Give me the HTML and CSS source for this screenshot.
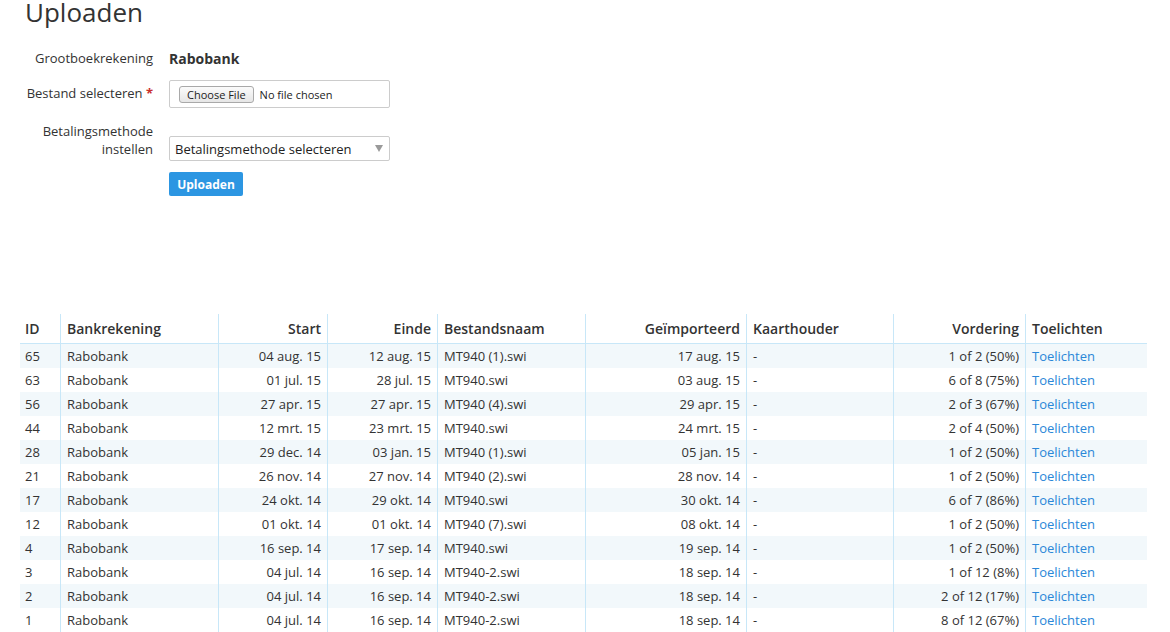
FILE: index.html
```html
<!DOCTYPE html>
<html lang="nl">
<head>
<meta charset="utf-8">
<title>Uploaden</title>
<link rel="stylesheet" href="styles.css">
</head>
<body>
<div class="page">
  <h1 class="title">Uploaden</h1>
  <form class="upload-form">
    <div class="form-row row-static">
      <div class="label">Grootboekrekening</div>
      <div class="value static-value">Rabobank</div>
    </div>
    <div class="form-row row-file">
      <div class="label label-file">Bestand selecteren <span class="req">*</span></div>
      <div class="value">
        <div class="file-box">
          <span class="file-btn">Choose File</span>
          <span class="file-text">No file chosen</span>
        </div>
      </div>
    </div>
    <div class="form-row row-select">
      <div class="label">Betalingsmethode<br>instellen</div>
      <div class="value">
        <div class="select-box">
          <span>Betalingsmethode selecteren</span>
          <svg class="caret" width="8" height="7" viewBox="0 0 8 7"><path d="M0 0H8L4 7Z" fill="#9a9a9a"/></svg>
        </div>
      </div>
    </div>
    <div class="form-row row-submit">
      <div class="label"></div>
      <div class="value"><button type="button" class="btn-primary">Uploaden</button></div>
    </div>
  </form>

  <table class="data-table">
    <colgroup>
      <col class="c-id"><col class="c-bank"><col class="c-start"><col class="c-end"><col class="c-file"><col class="c-imp"><col class="c-card"><col class="c-prog"><col class="c-link">
    </colgroup>
    <thead>
      <tr>
        <th>ID</th><th>Bankrekening</th><th class="r">Start</th><th class="r">Einde</th><th>Bestandsnaam</th><th class="r">Geïmporteerd</th><th>Kaarthouder</th><th class="r">Vordering</th><th>Toelichten</th>
      </tr>
    </thead>
    <tbody>
      <tr><td>65</td><td>Rabobank</td><td class="r">04 aug. 15</td><td class="r">12 aug. 15</td><td>MT940 (1).swi</td><td class="r">17 aug. 15</td><td>-</td><td class="r">1 of 2 (50%)</td><td><a href="#">Toelichten</a></td></tr>
      <tr><td>63</td><td>Rabobank</td><td class="r">01 jul. 15</td><td class="r">28 jul. 15</td><td>MT940.swi</td><td class="r">03 aug. 15</td><td>-</td><td class="r">6 of 8 (75%)</td><td><a href="#">Toelichten</a></td></tr>
      <tr><td>56</td><td>Rabobank</td><td class="r">27 apr. 15</td><td class="r">27 apr. 15</td><td>MT940 (4).swi</td><td class="r">29 apr. 15</td><td>-</td><td class="r">2 of 3 (67%)</td><td><a href="#">Toelichten</a></td></tr>
      <tr><td>44</td><td>Rabobank</td><td class="r">12 mrt. 15</td><td class="r">23 mrt. 15</td><td>MT940.swi</td><td class="r">24 mrt. 15</td><td>-</td><td class="r">2 of 4 (50%)</td><td><a href="#">Toelichten</a></td></tr>
      <tr><td>28</td><td>Rabobank</td><td class="r">29 dec. 14</td><td class="r">03 jan. 15</td><td>MT940 (1).swi</td><td class="r">05 jan. 15</td><td>-</td><td class="r">1 of 2 (50%)</td><td><a href="#">Toelichten</a></td></tr>
      <tr><td>21</td><td>Rabobank</td><td class="r">26 nov. 14</td><td class="r">27 nov. 14</td><td>MT940 (2).swi</td><td class="r">28 nov. 14</td><td>-</td><td class="r">1 of 2 (50%)</td><td><a href="#">Toelichten</a></td></tr>
      <tr><td>17</td><td>Rabobank</td><td class="r">24 okt. 14</td><td class="r">29 okt. 14</td><td>MT940.swi</td><td class="r">30 okt. 14</td><td>-</td><td class="r">6 of 7 (86%)</td><td><a href="#">Toelichten</a></td></tr>
      <tr><td>12</td><td>Rabobank</td><td class="r">01 okt. 14</td><td class="r">01 okt. 14</td><td>MT940 (7).swi</td><td class="r">08 okt. 14</td><td>-</td><td class="r">1 of 2 (50%)</td><td><a href="#">Toelichten</a></td></tr>
      <tr><td>4</td><td>Rabobank</td><td class="r">16 sep. 14</td><td class="r">17 sep. 14</td><td>MT940.swi</td><td class="r">19 sep. 14</td><td>-</td><td class="r">1 of 2 (50%)</td><td><a href="#">Toelichten</a></td></tr>
      <tr><td>3</td><td>Rabobank</td><td class="r">04 jul. 14</td><td class="r">16 sep. 14</td><td>MT940-2.swi</td><td class="r">18 sep. 14</td><td>-</td><td class="r">1 of 12 (8%)</td><td><a href="#">Toelichten</a></td></tr>
      <tr><td>2</td><td>Rabobank</td><td class="r">04 jul. 14</td><td class="r">16 sep. 14</td><td>MT940-2.swi</td><td class="r">18 sep. 14</td><td>-</td><td class="r">2 of 12 (17%)</td><td><a href="#">Toelichten</a></td></tr>
      <tr><td>1</td><td>Rabobank</td><td class="r">04 jul. 14</td><td class="r">16 sep. 14</td><td>MT940-2.swi</td><td class="r">18 sep. 14</td><td>-</td><td class="r">8 of 12 (67%)</td><td><a href="#">Toelichten</a></td></tr>
    </tbody>
  </table>
</div>
</body>
</html>
```

FILE: styles.css
```css
* { box-sizing: border-box; }
html, body { margin: 0; padding: 0; background: #fff; }
body {
  font-family: "Open Sans", "Liberation Sans", sans-serif;
  font-size: 13px;
  color: #333;
}
.page { padding: 0 23px 0 20px; }
.title {
  margin: 0 0 0 5px;
  font-size: 26px;
  line-height: 24px;
  font-weight: 400;
  color: #333;
}
.upload-form { margin-top: 24px; }
.form-row {
  display: grid;
  grid-template-columns: 133px 221px;
  column-gap: 16px;
}
.label {
  text-align: right;
  line-height: 18px;
  color: #333;
}
.label-file { margin-top: -2px; }
.req { color: #c9302c; font-weight: 700; }
.row-static { height: 20px; align-items: center; }
.static-value { font-weight: 700; font-size: 14px; }
.row-file { margin-top: 12px; height: 28px; align-items: center; }
.file-box {
  height: 28px;
  border: 1px solid #ccc;
  border-radius: 2px;
  display: flex;
  align-items: center;
  padding-left: 9px;
  gap: 6px;
  font-size: 11px;
}
.file-btn {
  height: 17px;
  padding: 0 7px;
  border: 1px solid #a9a9a9;
  border-radius: 3px;
  background: linear-gradient(#fbfbfb, #e6e6e6);
  line-height: 15px;
  color: #222;
}
.file-text { color: #222; }
.row-select { margin-top: 14px; }
.row-select .value { padding-top: 14px; }
.select-box {
  height: 25px;
  border: 1px solid #ccc;
  border-radius: 2px;
  display: flex;
  align-items: center;
  justify-content: space-between;
  padding: 0 6px 0 5px;
  color: #222;
}
.caret { display: block; }
.row-submit { margin-top: 11px; }
.btn-primary {
  height: 24px;
  width: 74px;
  padding: 0;
  border: none;
  border-radius: 2px;
  background: #2c96e2;
  color: #fff;
  font-family: inherit;
  font-size: 12px;
  font-weight: 700;
  cursor: pointer;
}

.data-table {
  margin-top: 118px;
  width: 1127px;
  table-layout: fixed;
  border-collapse: separate;
  border-spacing: 0;
}
.c-id { width: 40px; }
.c-bank { width: 158px; }
.c-start { width: 109px; }
.c-end { width: 110px; }
.c-file { width: 148px; }
.c-imp { width: 161px; }
.c-card { width: 147px; }
.c-prog { width: 132px; }
.c-link { width: 122px; }
.data-table th,
.data-table td {
  padding: 0 6px;
  text-align: left;
  white-space: nowrap;
  vertical-align: middle;
}
.data-table th + th,
.data-table td + td { border-left: 1px solid #c8e7f8; }
.data-table th {
  height: 30px;
  font-size: 14px;
  font-weight: 600;
  border-bottom: 1px solid #c8e7f8;
  padding-bottom: 1px;
}
.data-table th:first-child,
.data-table td:first-child { padding-left: 5px; }
.data-table td { height: 24px; line-height: 18px; }
.data-table .r { text-align: right; }
.data-table tbody tr:nth-child(odd) td { background: #f2f8fb; }
.data-table a { color: #2a87d8; text-decoration: none; }
```
